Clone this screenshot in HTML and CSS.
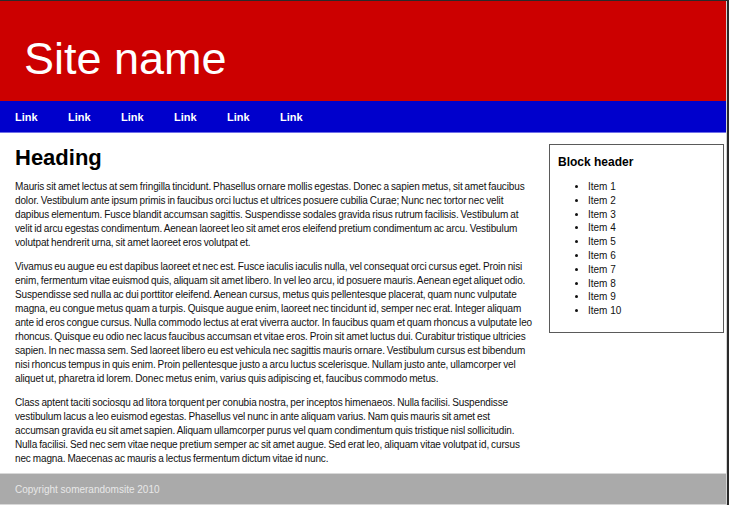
FILE: index.html
```html
<!DOCTYPE html>
<html>
<head>
<meta charset="utf-8">
<title>Site name</title>
<link rel="stylesheet" href="styles.css">
</head>
<body>
<div class="frame">
  <div class="page">
    <header class="masthead"><h1 class="site-name">Site name</h1></header>
    <nav class="nav">
      <a href="#">Link</a>
      <a href="#">Link</a>
      <a href="#">Link</a>
      <a href="#">Link</a>
      <a href="#">Link</a>
      <a href="#">Link</a>
    </nav>
    <div class="body">
      <main class="content">
        <h2 class="heading">Heading</h2>
        <p>Mauris sit amet lectus at sem fringilla tincidunt. Phasellus ornare mollis egestas. Donec a sapien metus, sit amet faucibus dolor. Vestibulum ante ipsum primis in faucibus orci luctus et ultrices posuere cubilia Curae; Nunc nec tortor nec velit dapibus elementum. Fusce blandit accumsan sagittis. Suspendisse sodales gravida risus rutrum facilisis. Vestibulum at velit id arcu egestas condimentum. Aenean laoreet leo sit amet eros eleifend pretium condimentum ac arcu. Vestibulum volutpat hendrerit urna, sit amet laoreet eros volutpat et.</p>
        <p>Vivamus eu augue eu est dapibus laoreet et nec est. Fusce iaculis iaculis nulla, vel consequat orci cursus eget. Proin nisi enim, fermentum vitae euismod quis, aliquam sit amet libero. In vel leo arcu, id posuere mauris. Aenean eget aliquet odio. Suspendisse sed nulla ac dui porttitor eleifend. Aenean cursus, metus quis pellentesque placerat, quam nunc vulputate magna, eu congue metus quam a turpis. Quisque augue enim, laoreet nec tincidunt id, semper nec erat. Integer aliquam ante id eros congue cursus. Nulla commodo lectus at erat viverra auctor. In faucibus quam et quam rhoncus a vulputate leo rhoncus. Quisque eu odio nec lacus faucibus accumsan et vitae eros. Proin sit amet luctus dui. Curabitur tristique ultricies sapien. In nec massa sem. Sed laoreet libero eu est vehicula nec sagittis mauris ornare. Vestibulum cursus est bibendum nisi rhoncus tempus in quis enim. Proin pellentesque justo a arcu luctus scelerisque. Nullam justo ante, ullamcorper vel aliquet ut, pharetra id lorem. Donec metus enim, varius quis adipiscing et, faucibus commodo metus.</p>
        <p>Class aptent taciti sociosqu ad litora torquent per conubia nostra, per inceptos himenaeos. Nulla facilisi. Suspendisse vestibulum lacus a leo euismod egestas. Phasellus vel nunc in ante aliquam varius. Nam quis mauris sit amet est accumsan gravida eu sit amet sapien. Aliquam ullamcorper purus vel quam condimentum quis tristique nisl sollicitudin. Nulla facilisi. Sed nec sem vitae neque pretium semper ac sit amet augue. Sed erat leo, aliquam vitae volutpat id, cursus nec magna. Maecenas ac mauris a lectus fermentum dictum vitae id nunc.</p>
      </main>
      <aside class="sidebar">
        <div class="block">
          <h3 class="block-header">Block header</h3>
          <ul class="block-list">
            <li>Item 1</li>
            <li>Item 2</li>
            <li>Item 3</li>
            <li>Item 4</li>
            <li>Item 5</li>
            <li>Item 6</li>
            <li>Item 7</li>
            <li>Item 8</li>
            <li>Item 9</li>
            <li>Item 10</li>
          </ul>
        </div>
      </aside>
    </div>
    <footer class="footer">Copyright somerandomsite 2010</footer>
  </div>
</div>
</body>
</html>
```
FILE: styles.css
```css
* { box-sizing: border-box; }
html, body { margin: 0; padding: 0; background: #fff; }
body {
  font-family: "Liberation Sans", Arial, sans-serif;
  font-size: 10px;
  color: #111;
}
.frame {
  border-top: 1px solid #2a2a2a;
  border-right: 2px solid #2a2a2a;
  height: 505px;
}
.page {
  border-right: 1px solid #d4d4d4;
  height: 504px;
  display: flex;
  flex-direction: column;
  overflow: hidden;
}
.masthead {
  flex: none;
  background: #cc0000;
  height: 100px;
  padding: 14px 24px 0;
  display: flex;
  align-items: center;
}
.site-name {
  margin: 0;
  color: #fff;
  font-weight: normal;
  font-size: 45px;
  line-height: 1;
}
.nav {
  flex: none;
  background: #0000cc;
  height: 32px;
  border-bottom: 1px solid #7070e8;
  display: flex;
  align-items: center;
  padding-left: 15px;
  gap: 30px;
}
.nav a {
  color: #fff;
  font-weight: bold;
  font-size: 11px;
  text-decoration: none;
  width: 23px;
}
.body {
  flex: 1;
  min-height: 0;
  display: flex;
  gap: 13px;
  padding: 11px 2px 0 15px;
}
.content {
  width: 521px;
  flex: none;
}
.heading {
  margin: 0 0 8px;
  font-size: 22px;
  font-weight: bold;
  line-height: 28px;
  color: #000;
}
.content p {
  margin: 0 0 10px;
  line-height: 14px;
  letter-spacing: -0.13px;
  word-spacing: -0.6px;
}
.sidebar {
  flex: 1;
}
.block {
  border: 1px solid #5a5a5a;
  height: 189px;
  padding: 9px 8px;
}
.block-header {
  margin: 0 0 10px;
  font-size: 12px;
  font-weight: bold;
  line-height: 16px;
  color: #000;
}
.block-list {
  margin: 0;
  padding-left: 30px;
  line-height: 13.8px;
}
.footer {
  flex: none;
  background: #aaaaaa;
  border-top: 1px solid #d8d8d8;
  border-bottom: 1px solid #d8d8d8;
  height: 32px;
  padding: 0 15px;
  display: flex;
  align-items: center;
  color: #e8e8e8;
  font-size: 10px;
}
```
